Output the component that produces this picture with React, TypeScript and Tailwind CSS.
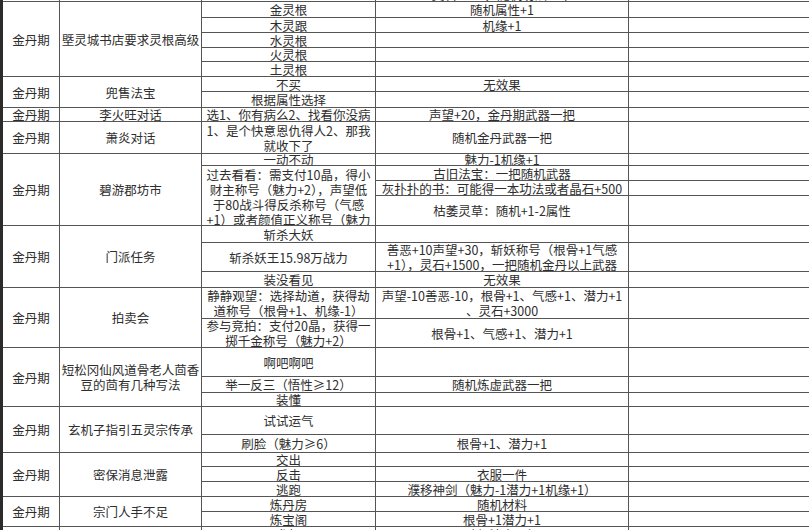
type Sub = { h: string; t: string[]; top?: boolean };
type Group = {
  h: string;
  a: string;
  b: string[];
  c: Sub[];
  d: Sub[];
};

const s = (h: string, ...t: string[]): Sub => ({ h, t });

const groups: Group[] = [
  {
    h: "h-[15px]",
    a: "",
    b: [""],
    c: [s("h-[15px]", "")],
    d: [s("h-[15px]", "灵石+500，随机功法一本")],
  },
  {
    h: "h-[75px]",
    a: "金丹期",
    b: ["塈灵城书店要求灵根高级"],
    c: [
      s("h-[16px]", "金灵根"),
      s("h-[15px]", "木灵跟"),
      s("h-[15px]", "水灵根"),
      s("h-[14px]", "火灵根"),
      s("h-[15px]", "土灵根"),
    ],
    d: [
      s("h-[16px]", "随机属性+1"),
      s("h-[15px]", "机缘+1"),
      s("h-[15px]", ""),
      s("h-[14px]", ""),
      s("h-[15px]", ""),
    ],
  },
  {
    h: "h-[31px]",
    a: "金丹期",
    b: ["兜售法宝"],
    c: [s("h-[15px]", "不买"), s("h-[16px]", "根据属性选择")],
    d: [s("h-[15px]", "无效果"), s("h-[16px]", "")],
  },
  {
    h: "h-[14px]",
    a: "金丹期",
    b: ["李火旺对话"],
    c: [s("h-[14px]", "选1、你有病么2、找看你没病")],
    d: [s("h-[14px]", "声望+20，金丹期武器一把")],
  },
  {
    h: "h-[32px]",
    a: "金丹期",
    b: ["萧炎对话"],
    c: [s("h-[32px]", "1、是个快意恩仇得人2、那我", "就收下了")],
    d: [s("h-[32px]", "随机金丹武器一把")],
  },
  {
    h: "h-[72px]",
    a: "金丹期",
    b: ["碧游郡坊市"],
    c: [
      s("h-[12px]", "一动不动"),
      {
        h: "h-[60px]",
        top: true,
        t: [
          "过去看看：需支付10晶，得小",
          "财主称号（魅力+2），声望低",
          "于80战斗得反杀称号（气感",
          "+1）或者颜值正义称号（魅力",
        ],
      },
    ],
    d: [
      s("h-[12px]", "魅力-1机缘+1"),
      s("h-[15px]", "古旧法宝：一把随机武器"),
      s("h-[15px]", "灰扑扑的书：可能得一本功法或者晶石+500"),
      s("h-[30px]", "枯萎灵草：随机+1-2属性"),
    ],
  },
  {
    h: "h-[62px]",
    a: "金丹期",
    b: ["门派任务"],
    c: [
      s("h-[17px]", "斩杀大妖"),
      s("h-[29px]", "斩杀妖王15.98万战力"),
      s("h-[16px]", "装没看见"),
    ],
    d: [
      s("h-[17px]", ""),
      s(
        "h-[29px]",
        "善恶+10声望+30，斩妖称号（根骨+1气感",
        "+1），灵石+1500，一把随机金丹以上武器",
      ),
      s("h-[16px]", "无效果"),
    ],
  },
  {
    h: "h-[60px]",
    a: "金丹期",
    b: ["拍卖会"],
    c: [
      s("h-[31px]", "静静观望：选择劫道，获得劫", "道称号（根骨+1、机缘-1）"),
      s("h-[29px]", "参与竞拍：支付20晶，获得一", "掷千金称号（魅力+2）"),
    ],
    d: [
      s("h-[31px]", "声望-10善恶-10，根骨+1、气感+1、潜力+1", "、灵石+3000"),
      s("h-[29px]", "根骨+1、气感+1、潜力+1"),
    ],
  },
  {
    h: "h-[59px]",
    a: "金丹期",
    b: ["短松冈仙风道骨老人茴香", "豆的茴有几种写法"],
    c: [
      s("h-[29px]", "啊吧啊吧"),
      s("h-[16px]", "举一反三（悟性≥12）"),
      s("h-[14px]", "装懂"),
    ],
    d: [
      s("h-[29px]", ""),
      s("h-[16px]", "随机炼虚武器一把"),
      s("h-[14px]", ""),
    ],
  },
  {
    h: "h-[46px]",
    a: "金丹期",
    b: ["玄机子指引五灵宗传承"],
    c: [s("h-[28px]", "试试运气"), s("h-[18px]", "刷脸（魅力≥6）")],
    d: [s("h-[28px]", ""), s("h-[18px]", "根骨+1、潜力+1")],
  },
  {
    h: "h-[44px]",
    a: "金丹期",
    b: ["密保消息泄露"],
    c: [s("h-[14px]", "交出"), s("h-[15px]", "反击"), s("h-[15px]", "逃跑")],
    d: [
      s("h-[14px]", ""),
      s("h-[15px]", "衣服一件"),
      s("h-[15px]", "濮移神剑（魅力-1潜力+1机缘+1）"),
    ],
  },
  {
    h: "h-[30px]",
    a: "金丹期",
    b: ["宗门人手不足"],
    c: [s("h-[15px]", "炼丹房"), s("h-[15px]", "炼宝阁")],
    d: [s("h-[15px]", "随机材料"), s("h-[15px]", "根骨+1潜力+1")],
  },
  {
    h: "h-[30px]",
    a: "金丹期",
    b: ["宗门大比"],
    c: [s("h-[15px]", "参加"), s("h-[15px]", "不参加")],
    d: [s("h-[15px]", "随机法宝一把"), s("h-[15px]", "")],
  },
];

function Lines({ t }: { t: string[] }) {
  return (
    <div className="whitespace-nowrap text-center">
      {t.map((line, i) => (
        <div key={i}>{line}</div>
      ))}
    </div>
  );
}

function Column({ items, w }: { items: Sub[]; w: string }) {
  return (
    <div className={`flex shrink-0 flex-col ${w}`}>
      {items.map((it, i) => (
        <div
          key={i}
          className={`flex justify-center overflow-hidden border-b border-r border-[#555] ${it.h} ${
            it.top ? "items-start pt-[1px]" : "items-center"
          }`}
        >
          <Lines t={it.t} />
        </div>
      ))}
    </div>
  );
}

export default function App() {
  return (
    <div
      className="flex h-[530px] w-[809px] overflow-hidden bg-white text-[12.5px] leading-[15px] text-[#2e2e2e]"
      style={{ fontFamily: '"Noto Sans CJK SC", "Noto Sans", sans-serif' }}
    >
      <div className="w-[3px] shrink-0 bg-[#2b2b2b]" />
      <div className="-mt-[13px] flex min-w-0 flex-1 flex-col">
        {groups.map((g, gi) => (
          <div key={gi} className={`flex shrink-0 ${g.h}`}>
            <div className="flex w-[57px] shrink-0 items-center justify-center border-b border-r border-[#555]">
              {g.a}
            </div>
            <div className="flex w-[142px] shrink-0 items-center justify-center overflow-visible border-b border-r border-[#555]">
              <Lines t={g.b} />
            </div>
            <Column items={g.c} w="w-[174px]" />
            <Column items={g.d} w="w-[253px]" />
            <div className="flex min-w-[180px] flex-1 flex-col">
              {g.d.map((it, i) => (
                <div key={i} className={`border-b border-[#555] ${it.h}`} />
              ))}
            </div>
          </div>
        ))}
      </div>
    </div>
  );
}
